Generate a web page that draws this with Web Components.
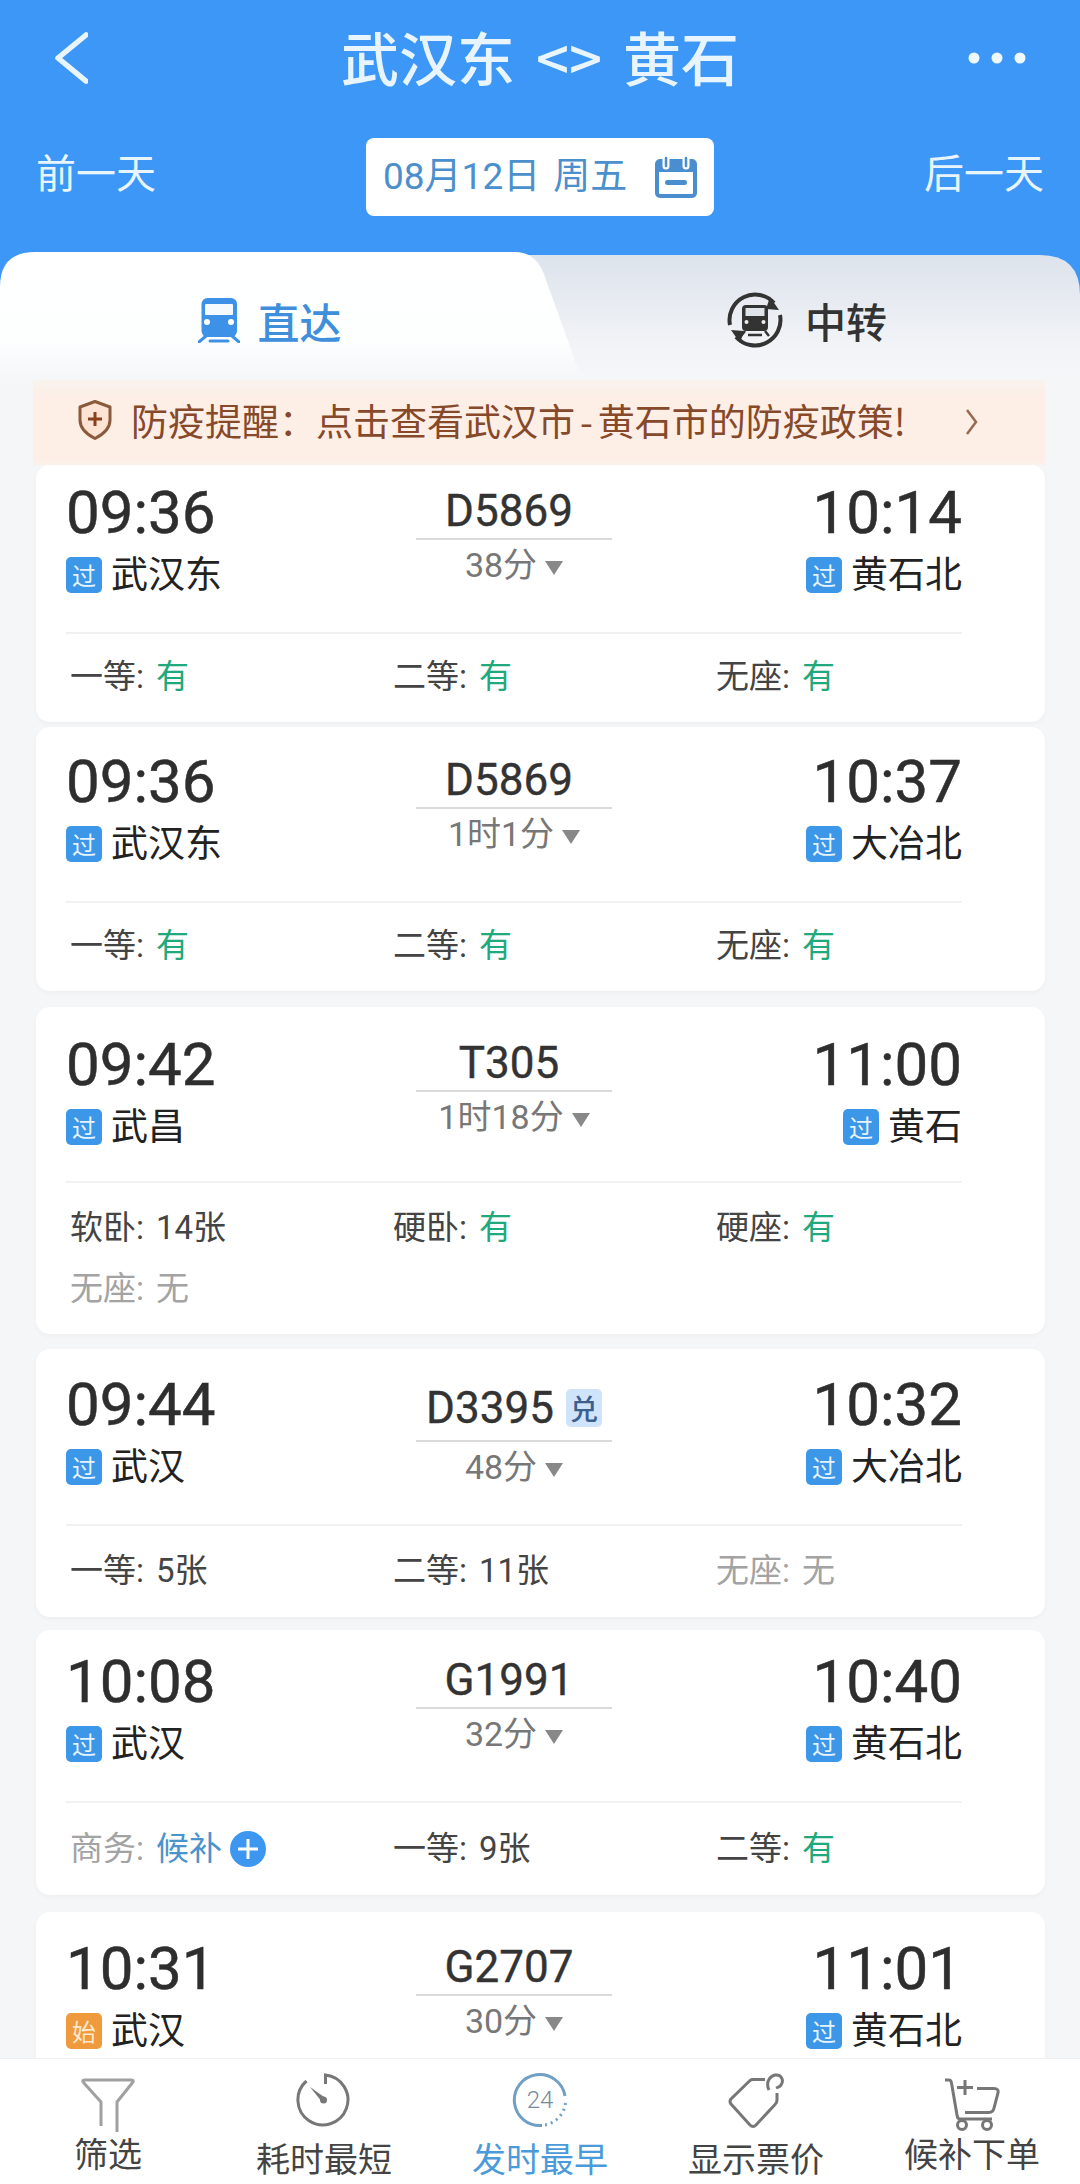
<!DOCTYPE html>
<html lang="zh"><head><meta charset="utf-8"><title>武汉东 黄石</title>
<style>
html,body{margin:0;padding:0}
body{width:1080px;height:2184px;overflow:hidden;display:flex;flex-direction:column;background:#f5f6f8;font-family:Roboto,"Noto Sans CJK SC",sans-serif;color:#333}
</style></head><body>
<ticket-header></ticket-header>
<ticket-tabs></ticket-tabs>
<notice-bar>防疫提醒&#xFF1A;点击查看武汉市<span style="margin:0 5px">-</span>黄石市的防疫政策!</notice-bar>
<train-list>
<train-card dep="09:36" arr="10:14" no="D5869" dur="38分" from="武汉东" to="黄石北" pt="18" pb="22" st="20" mt="0">
<seat-info label="一等" value="有" kind="ok"></seat-info><seat-info label="二等" value="有" kind="ok"></seat-info><seat-info label="无座" value="有" kind="ok"></seat-info>
</train-card>
<train-card dep="09:36" arr="10:37" no="D5869" dur="1时1分" from="武汉东" to="大冶北" pt="25" pb="22" st="20" mt="5">
<seat-info label="一等" value="有" kind="ok"></seat-info><seat-info label="二等" value="有" kind="ok"></seat-info><seat-info label="无座" value="有" kind="ok"></seat-info>
</train-card>
<train-card dep="09:42" arr="11:00" no="T305" dur="1时18分" from="武昌" to="黄石" pt="28" pb="22" mb="32" mt="16">
<seat-info label="软卧" value="14张"></seat-info><seat-info label="硬卧" value="有" kind="ok"></seat-info><seat-info label="硬座" value="有" kind="ok"></seat-info><seat-info label="无座" value="无" kind="off"></seat-info>
</train-card>
<train-card dep="09:44" arr="10:32" no="D3395" dur="48分" from="武汉" to="大冶北" pt="26" pb="23" mt="15" tag="兑">
<seat-info label="一等" value="5张"></seat-info><seat-info label="二等" value="11张"></seat-info><seat-info label="无座" value="无" kind="off"></seat-info>
</train-card>
<train-card dep="10:08" arr="10:40" no="G1991" dur="32分" from="武汉" to="黄石北" pt="22" pb="23" st="23" mt="13">
<seat-info label="商务" value="候补" kind="wait"></seat-info><seat-info label="一等" value="9张"></seat-info><seat-info label="二等" value="有" kind="ok"></seat-info>
</train-card>
<train-card dep="10:31" arr="11:01" no="G2707" dur="30分" from="武汉" to="黄石北" fromtag="始" pt="27" pb="20" mt="17"></train-card>
</train-list>
<bottom-bar></bottom-bar>
<script>
const def=(name,html)=>{customElements.define(name,class extends HTMLElement{
  constructor(){super();this.attachShadow({mode:'open'});}
  connectedCallback(){this.shadowRoot.innerHTML=typeof html==='function'?html(this):html;}
});};
const FONT='font-family:Roboto,"Noto Sans CJK SC",sans-serif;';
const CJK='font-family:"Noto Sans CJK SC",sans-serif;';

def('ticket-header',`<style>
:host{display:block;flex:none;height:252px;box-sizing:border-box;background:#3d97f6;color:#e8f5ff;${CJK}}
.top{height:120px;display:grid;grid-template-columns:1fr auto 1fr;align-items:center;padding:0 52px}
.top svg{display:block}
.back{margin-top:-4px}
.more{justify-self:end;margin:-4px -3px 0 0}
h1{margin:-8px 0 0;font:500 58px/80px "Noto Sans CJK SC",sans-serif;white-space:pre;word-spacing:8px}
.row{margin-top:18px;height:78px;display:flex;justify-content:space-between;align-items:center;padding:0 36px}
.side{font-size:40px;line-height:50px;padding-bottom:13px}
.date{width:348px;height:78px;box-sizing:border-box;background:#fff;border-radius:8px;display:flex;align-items:center;padding:0 17px;justify-content:space-between;color:#4b90cc;font:37px/50px Roboto,"Noto Sans CJK SC",sans-serif;word-spacing:4px}
</style>
<div class="top">
<svg class="back" width="36" height="54" viewBox="0 0 36 54"><path d="M34 4 6 27 34 50" fill="none" stroke="#e8f5ff" stroke-width="5.5" stroke-linecap="round" stroke-linejoin="round"/></svg>
<h1>武汉东 <> 黄石</h1>
<svg class="more" width="64" height="14" viewBox="0 0 64 14"><circle cx="7" cy="7" r="5.5" fill="#eef8ff"/><circle cx="30" cy="7" r="5.5" fill="#eef8ff"/><circle cx="53" cy="7" r="5.5" fill="#eef8ff"/></svg>
</div>
<div class="row"><span class="side">前一天</span>
<div class="date"><span>08月12日 周五</span>
<svg width="42" height="42" viewBox="0 0 42 42"><rect x="2" y="5" width="38" height="35" rx="3" fill="#fff" stroke="#4a8ed0" stroke-width="4"/><rect x="2" y="5" width="38" height="11" fill="#4a8ed0"/><path d="M11 1v9M31 1v9" stroke="#fff" stroke-width="7" stroke-linecap="round"/><path d="M11 2v8M31 2v8" stroke="#4a8ed0" stroke-width="2.5" stroke-linecap="round"/><rect x="10" y="24" width="22" height="5" rx="2.5" fill="#4a8ed0"/></svg>
</div>
<span class="side">后一天</span></div>`);

def('ticket-tabs',`<style>
:host{display:block;flex:none;height:128px;position:relative;background:#3d97f6;${CJK}}
.bg{position:absolute;left:0;top:0}
.tabs{position:relative;display:grid;grid-template-columns:540px 540px;height:128px;box-sizing:border-box;padding-top:38px}
.tab{display:flex;align-items:center;justify-content:center;height:60px;gap:17px;font-weight:500;font-size:42px}
.on{color:#3f8fdc}.off{color:#333;font-size:41px;gap:22px;padding-right:6px}
svg{display:block}
</style>
<svg class="bg" width="1080" height="128" viewBox="0 0 1080 128"><defs>
<linearGradient id="g" x1="0" y1="0" x2="0" y2="1"><stop offset="0" stop-color="#dde3ec"/><stop offset=".75" stop-color="#f2f4f7"/><stop offset="1" stop-color="#f5f6f8"/></linearGradient>
<linearGradient id="w" x1="0" y1="0" x2="0" y2="1"><stop offset="0" stop-color="#fff"/><stop offset=".7" stop-color="#fdfefe"/><stop offset="1" stop-color="#f5f6f8"/></linearGradient></defs>
<path d="M500 3H1040Q1080 3 1080 43V128H500Z" fill="url(#g)"/>
<path d="M0 128V35Q0 0 35 0H515Q538 0 546 28L572 100Q578 128 600 128Z" fill="url(#w)"/></svg>
<div class="tabs">
<div class="tab on"><svg width="42" height="46" viewBox="0 0 42 46"><rect x="3.5" y="1" width="35.5" height="39" rx="6" fill="#3d92e8"/><rect x="7" y="7" width="28" height="11" rx="1" fill="#f4faff"/><circle cx="9" cy="25" r="3" fill="#fff"/><circle cx="33" cy="25" r="3" fill="#fff"/><path d="M8 39 1 45M34 39l7 6M12 44H30" stroke="#3d92e8" stroke-width="3" stroke-linecap="round"/></svg><span>直达</span></div>
<div class="tab off"><svg width="56" height="56" viewBox="0 0 56 56"><path d="M3 33A25.5 25.5 0 0 1 47 11M53 23A25.5 25.5 0 0 1 9 45" fill="none" stroke="#333" stroke-width="4"/><path d="M43 5 52 18 39 17ZM13 51 4 38 17 39Z" fill="#333"/><rect x="15" y="13" width="26" height="26" rx="4" fill="#333"/><rect x="18.5" y="16" width="19" height="8" fill="#dfe4ea"/><circle cx="19.5" cy="30" r="2" fill="#eee"/><circle cx="36.5" cy="30" r="2" fill="#eee"/><path d="M18 39l-4 5M38 39l4 5M21 43H35" stroke="#333" stroke-width="2.5"/></svg><span>中转</span></div>
</div>`);

def('notice-bar',`<style>
:host{display:block;flex:none;height:85px;margin:0 35px 0 33px;background:linear-gradient(#f9f3ee,#fdeee6 22%,#fdeee6 85%,#fcf0ea);color:#86492a;${CJK}}
.n{display:flex;align-items:center;height:85px;box-sizing:border-box;padding:0 0 5px 45px;font-size:37px;white-space:nowrap}
svg{display:block;flex:none}
.t{margin-left:19px;width:782px}
.c{margin-left:52px;margin-top:4px}
</style><div class="n">
<svg width="34" height="40" viewBox="0 0 34 40"><path d="M17 1.5 32 7V20C32 30 24 35 17 38.5 10 35 2 30 2 20V7Z" fill="#fde3d4" stroke="#8a5a3c" stroke-width="3" stroke-linejoin="round"/><path d="M17 12V26M10 19H24" stroke="#8a3f1e" stroke-width="3"/></svg>
<span class="t"><slot></slot></span>
<svg class="c" width="14" height="28" viewBox="0 0 14 28"><path d="M2 2 11 14 2 26" fill="none" stroke="#9a6a50" stroke-width="2.5"/></svg>
</div>`);

def('train-list',`<style>:host{display:block;flex:1;min-height:0;overflow:hidden;padding:0 35px 0 36px}</style><slot></slot>`);

const badge=t=>`<b class="badge ${t==='始'?'start':''}">${t}</b>`;
def('train-card',e=>{const a=(n,d='')=>e.getAttribute(n)||d;const tag=a('tag');return `<style>
:host{display:block;background:#fff;border-radius:14px;box-shadow:0 2px 5px rgba(0,0,0,.035);box-sizing:border-box;padding:${a('pt')}px 83px ${a('pb')}px 30px;margin-top:${a('mt')}px;${FONT}}
.top{display:grid;grid-template-columns:1fr 196px 1fr;height:114px;margin-bottom:${a('mb','35')}px}
.time{font-size:60px;line-height:60px;font-weight:400;color:#2e2e2e;-webkit-text-stroke:.5px #2e2e2e}
.st{display:flex;align-items:center;gap:9px;margin-top:7px;height:44px;font-size:37px;color:#222;${CJK}}
.r{text-align:right}.r .st{justify-content:flex-end}
.badge{display:flex;align-items:center;justify-content:center;width:36px;height:36px;border-radius:5px;background:#3d97e8;color:#e6f3ff;font:400 24px/36px "Noto Sans CJK SC",sans-serif;margin-top:6px}
.start{background:#ef9a3c;color:#fde9cf}
.m{text-align:center}
.no{margin-top:${tag?8:3}px;height:50px;font-size:44px;line-height:50px;font-weight:400;color:#333;-webkit-text-stroke:.4px #333;display:flex;justify-content:center;align-items:center;gap:12px;padding-right:${tag?0:10}px}
.tag{width:36px;height:38px;border-radius:5px;background:#cfe3fb;color:#3c5f8f;-webkit-text-stroke:0;font:500 28px/38px "Noto Sans CJK SC",sans-serif}
.line{height:2px;background:#d9dadc;margin-top:${tag?7:2}px}
.dur{margin-top:3px;height:44px;line-height:44px;font-size:34px;color:#777;display:flex;justify-content:center;align-items:center;gap:8px}
.dur i{width:0;height:0;border:9px solid transparent;border-top:14px solid #888;border-bottom:0;margin-top:5px}
hr{margin:0;border:0;height:2px;background:#f0f1f2}
.seats{display:grid;grid-template-columns:repeat(3,323px);row-gap:15px;padding-top:${a('st','22')}px;margin-left:4px}
</style>
<div class="top">
<div><div class="time">${a('dep')}</div><div class="st">${badge(a('fromtag')||'过')}<span>${a('from')}</span></div></div>
<div class="m"><div class="no"><span>${a('no')}</span>${tag?`<span class="tag">${tag}</span>`:''}</div><div class="line"></div><div class="dur"><span>${a('dur')}</span><i></i></div></div>
<div class="r"><div class="time">${a('arr')}</div><div class="st">${badge('过')}<span>${a('to')}</span></div></div>
</div><hr><div class="seats"><slot></slot></div>`;});

def('seat-info',e=>{const k=e.getAttribute('kind')||'';const off=k==='off';const wait=k==='wait';
const lc=off||wait?'#a3a3a3':'#444';const vc=k==='ok'?'#1fa97c':off?'#a3a3a3':wait?'#4a94cc':'#444';
return `<style>:host{display:flex;align-items:center;height:46px;font-size:33px;line-height:46px;${FONT}color:${lc}}
.v{margin-left:12px;color:${vc}}svg{margin-left:8px;display:block}</style>
<span>${e.getAttribute('label')}:</span><span class="v">${e.getAttribute('value')}</span>${wait?`<svg width="36" height="36" viewBox="0 0 36 36"><circle cx="18" cy="18" r="18" fill="#3d97f0"/><path d="M18 8V28M8 18H28" stroke="#fff" stroke-width="3"/></svg>`:''}`;});

def('bottom-bar',`<style>
:host{display:block;flex:none;height:126px;box-sizing:border-box;background:#fff;border-top:1px solid #eef0f2;${CJK}}
.g{display:grid;grid-template-columns:repeat(5,216px);padding-top:14px}
.i{display:flex;flex-direction:column;align-items:center;color:#444;font-size:34px;line-height:46px}
.i span{margin-top:2px}
.i.u span{margin-top:-3px}
.a{color:#4b9ad9}
svg{display:block;fill:none}
</style><div class="g">
<div class="i u"><svg width="56" height="60" viewBox="0 0 56 60"><path d="M3 9Q2 7 5 7H51Q54 7 53 9L37 29V59M3 9 21 29V53" stroke="#a0a0a0" stroke-width="3" stroke-linejoin="round"/></svg><span>筛选</span></div>
<div class="i"><svg width="56" height="60" viewBox="0 0 56 60"><path d="M29.5 11V2A25 25 0 1 1 10.5 8" stroke="#777" stroke-width="3"/><path d="M14 14 29.5 25 26 29Z" fill="#777"/><circle cx="27.5" cy="27" r="3.5" fill="#777"/></svg><span>耗时最短</span></div>
<div class="i a"><svg width="56" height="60" viewBox="0 0 56 60"><path d="M53 23A25.5 25.5 0 1 0 30 52.5" stroke="#6f9fc4" stroke-width="3"/><path d="M53.5 30A25.5 25.5 0 0 1 33 52" stroke="#6f9fc4" stroke-width="3" stroke-dasharray="2 4"/><text x="28" y="35" text-anchor="middle" font-family="Roboto" font-size="24" font-weight="300" fill="#75889a">24</text></svg><span>发时最早</span></div>
<div class="i"><svg width="56" height="60" viewBox="0 0 56 60"><path d="M37 6.5H25Q23 6.5 22 7.5L3 26Q1 28.5 3 31L22 52Q25 55 28 52L47 31.5Q49 30 49 27V20" stroke="#777" stroke-width="3"/><path d="M41 17C38 11 40 4 47 2 54 1 56 8 53 12 52 14 50 14 48 15" stroke="#777" stroke-width="3"/></svg><span>显示票价</span></div>
<div class="i u"><svg width="56" height="60" viewBox="0 0 56 60"><path d="M1 7H5Q7 7 7.5 10L13 42Q13.5 46 16 46H48" stroke="#777" stroke-width="3"/><path d="M33 15.5H50Q55 15.5 54 20L50 35Q49 39.5 45 39.5H21M21 7V22M13 14.5H29" stroke="#777" stroke-width="3"/><circle cx="18" cy="52" r="4.5" stroke="#777" stroke-width="3"/><circle cx="43" cy="52" r="4.5" stroke="#777" stroke-width="3"/></svg><span>候补下单</span></div>
</div>`);
</script>
</body></html>
